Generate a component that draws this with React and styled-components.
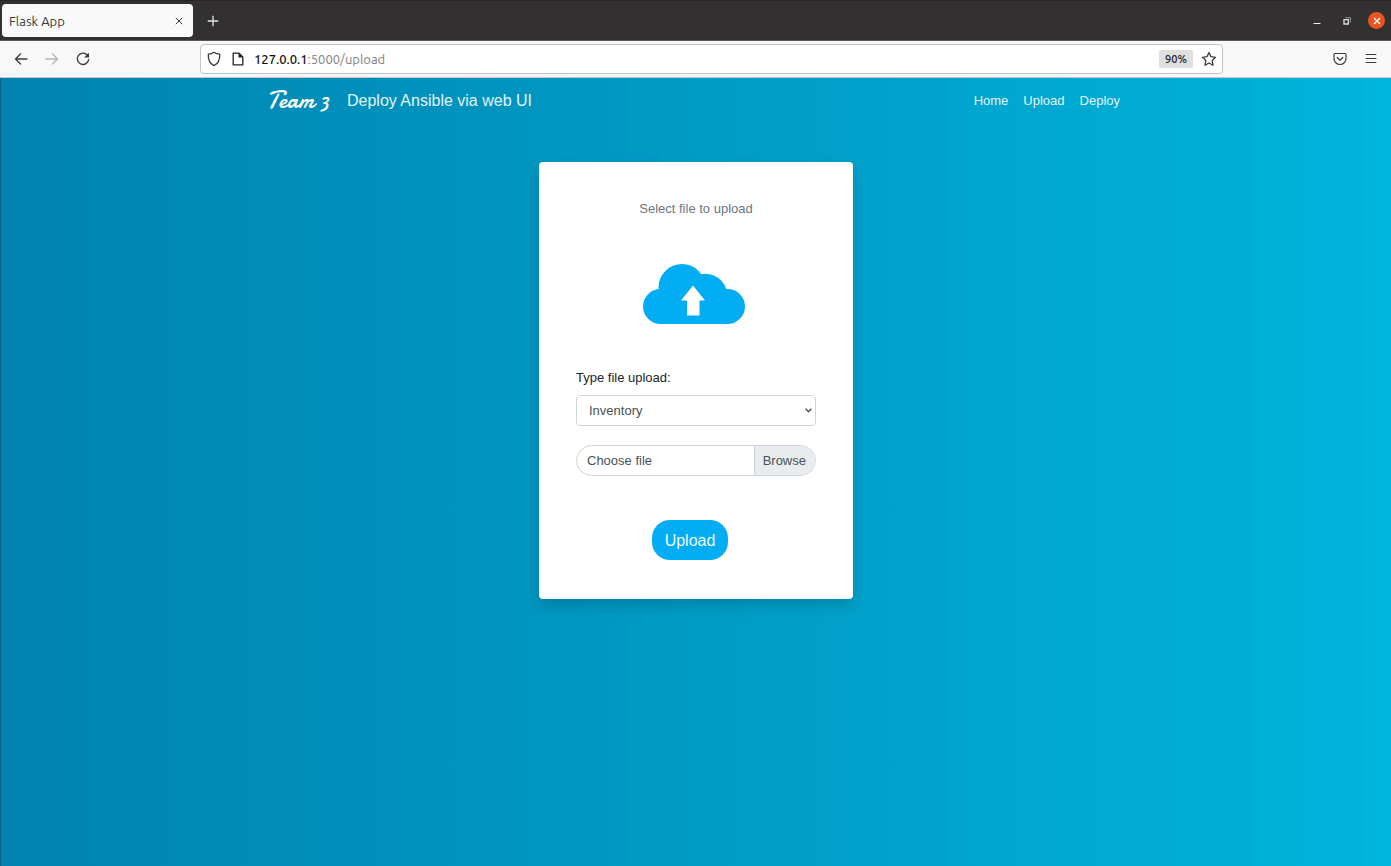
import React from "react";
import styled, { createGlobalStyle } from "styled-components";

const GlobalStyle = createGlobalStyle`
  *, *::before, *::after { box-sizing: border-box; }
  body { margin: 0; font-family: "Liberation Sans", Arial, sans-serif; font-size: 13px; line-height: 20px; color: #212529; }
  button, input, select { font: inherit; }
`;

const Window = styled.div`
  min-height: 100vh;
  display: flex;
  flex-direction: column;
`;

const TitleBar = styled.header`
  display: flex;
  align-items: center;
  height: 41px;
  padding: 0 6px 0 2px;
  background: #333031;
  border-top: 1px solid #272526;
  border-bottom: 1px solid #5a5858;
`;

const Tab = styled.div`
  display: flex;
  align-items: center;
  justify-content: space-between;
  width: 191px;
  height: 33px;
  padding: 0 6px 0 7px;
  border-radius: 4px;
  background: #f9f9f9;
  color: #3a3a3a;
  font-family: Ubuntu, "Noto Sans", sans-serif;
  font-size: 13px;
`;

const IconButton = styled.button`
  display: flex;
  align-items: center;
  justify-content: center;
  width: ${(p) => p.$size || 16}px;
  height: ${(p) => p.$size || 16}px;
  padding: 0;
  border: 0;
  border-radius: 50%;
  background: ${(p) => p.$bg || "transparent"};
  color: ${(p) => p.$color || "#3b3b3b"};
  svg { display: block; fill: none; stroke: currentColor; }
`;

const NewTab = styled.div`
  margin-left: 12px;
`;

const WindowControls = styled.div`
  display: flex;
  align-items: center;
  gap: 12px;
  margin-left: auto;
`;

const Toolbar = styled.div`
  display: grid;
  grid-template-columns: 200px minmax(0, 1fr) 168px;
  align-items: center;
  height: 37px;
  background: #f8f8f8;
  border-bottom: 1px solid #c5c5c5;
`;

const NavButtons = styled.div`
  display: flex;
  gap: 15px;
  padding-left: 13px;
`;

const ToolButtons = styled.div`
  display: flex;
  justify-content: flex-end;
  gap: 15px;
  padding-right: 12px;
`;

const AddressBar = styled.div`
  display: flex;
  align-items: center;
  height: 30px;
  padding: 0 5px;
  gap: 8px;
  background: #fff;
  border: 1px solid #c4c4c4;
  border-radius: 4px;
  font-family: Ubuntu, "Noto Sans", sans-serif;
`;

const Url = styled.div`
  flex: 1;
  font-size: 13px;
  color: #808080;
`;

const Host = styled.span`
  color: #111;
  font-weight: 500;
`;

const Zoom = styled.button`
  height: 18px;
  padding: 0 6px;
  border: 0;
  border-radius: 2px;
  background: #dfdfdf;
  color: #1c1c1c;
  font-size: 11px;
  line-height: 18px;
  font-weight: 500;
`;

const Page = styled.div`
  flex: 1;
  border-left: 1px solid #0d6587;
  background: linear-gradient(to right, #0083b0, #00b4db);
`;

const Navbar = styled.nav`
  display: flex;
  align-items: center;
  max-width: 858px;
  height: 46px;
  margin: 0 auto;
  padding-right: 5px;
  color: #fff;
`;

const Brand = styled.a`
  width: 80px;
  color: #fff;
  font-family: Damion, Satisfy, "Dancing Script", cursive;
  font-size: 24px;
  text-decoration: none;
`;

const Tagline = styled.span`
  color: #e3f4fa;
  font-size: 16px;
`;

const NavLinks = styled.div`
  display: flex;
  gap: 15px;
  margin-left: auto;
`;

const NavLink = styled.a`
  color: #e3f4fa;
  text-decoration: none;
`;

const Card = styled.main`
  width: 314px;
  margin: 38px auto 0;
  padding: 37px 37px 39px;
  border-radius: 4px;
  background: #fff;
  box-shadow: 0 7px 14px rgba(0, 0, 0, 0.15);
`;

const Prompt = styled.p`
  margin: 0;
  color: #6c757d;
  text-align: center;
`;

const CloudFrame = styled.div`
  display: flex;
  justify-content: center;
  padding: 45px 4px 44px 0;
`;

const Field = styled.div`
  margin-bottom: 19px;
`;

const FieldLabel = styled.label`
  display: block;
  margin-bottom: 7px;
`;

const SelectFrame = styled.div`
  display: grid;
  align-items: center;
  > * { grid-area: 1 / 1; }
  svg { justify-self: end; margin-right: 4px; pointer-events: none; }
`;

const Select = styled.select`
  appearance: none;
  width: 100%;
  height: 31px;
  padding: 0 12px;
  border: 1px solid #ced4da;
  border-radius: 4px;
  background: #fff;
  color: #495057;
`;

const FileLabel = styled.label`
  position: relative;
  display: flex;
  height: 31px;
  border: 1px solid #ced4da;
  border-radius: 16px;
  overflow: hidden;
  color: #495057;
  line-height: 29px;
`;

const FileInput = styled.input`
  position: absolute;
  inset: 0;
  width: 100%;
  opacity: 0;
`;

const FileName = styled.span`
  flex: 1;
  padding-left: 10px;
`;

const Browse = styled.span`
  padding: 0 9px 0 8px;
  border-left: 1px solid #ced4da;
  background: #e9ecef;
`;

const Actions = styled.div`
  display: flex;
  justify-content: center;
  padding: 25px 12px 0 0;
`;

const UploadButton = styled.button`
  height: 40px;
  padding: 1px 13px 0;
  border: 0;
  border-radius: 18px;
  background: #03adf3;
  color: #eefaff;
  font-size: 16px;
`;

function Cloud() {
  return (
    <svg width="102" height="60" viewBox="0 0 102 60" aria-hidden="true">
      <g fill="#03adf3">
        <circle cx="17.500" cy="42.500" r="17.500" />
        <circle cx="84.500" cy="42.500" r="17.500" />
        <circle cx="39" cy="23.500" r="23.500" />
        <circle cx="62.500" cy="31.500" r="21.700" />
        <path d="M17.500 25H84.500V60H17.500Z" />
      </g>
      <path fill="#fff" d="M50 21.500L62 36.500H56.500V51.500H44V36.500H38Z" />
    </svg>
  );
}

export default function App() {
  return (
    <Window>
      <GlobalStyle />
      <TitleBar>
        <Tab>
          <span>Flask App</span>
          <IconButton aria-label="Close tab">
            <svg width="8" height="8" viewBox="0 0 8 8"><path d="M.8.8l6.400 6.400M7.200.8L.8 7.200" /></svg>
          </IconButton>
        </Tab>
        <NewTab>
          <IconButton aria-label="New tab" $color="#e4e4e4">
            <svg width="12" height="12" viewBox="0 0 12 12"><path strokeWidth="1.300" d="M6 .7v10.600M.7 6h10.600" /></svg>
          </IconButton>
        </NewTab>
        <WindowControls>
          <IconButton aria-label="Minimize" $size={18} $color="#eee">
            <svg width="8" height="10" viewBox="0 0 8 10"><path d="M.5 7.500h7" /></svg>
          </IconButton>
          <IconButton aria-label="Restore" $size={18} $color="#ddd">
            <svg width="8" height="8" viewBox="0 0 8 8">
              <path strokeWidth="1.300" d="M1 2.700h4.300V7H1Z" />
              <path opacity=".6" d="M2.500.7h4.800v4.800" />
            </svg>
          </IconButton>
          <IconButton aria-label="Close window" $size={17} $bg="#e95420" $color="#fff">
            <svg width="8" height="8" viewBox="0 0 8 8"><path strokeWidth="1.300" d="M1 1l6 6M7 1L1 7" /></svg>
          </IconButton>
        </WindowControls>
      </TitleBar>
      <Toolbar>
        <NavButtons>
          <IconButton aria-label="Back">
            <svg width="14" height="14" viewBox="0 0 14 14"><path strokeWidth="1.300" strokeLinecap="round" strokeLinejoin="round" d="M13 7H1.500M6.500 2L1.500 7l5 5" /></svg>
          </IconButton>
          <IconButton aria-label="Forward" $color="#b5b5b5">
            <svg width="14" height="14" viewBox="0 0 14 14"><path strokeWidth="1.300" strokeLinecap="round" strokeLinejoin="round" d="M1 7h11.500M7.500 2l5 5l-5 5" /></svg>
          </IconButton>
          <IconButton aria-label="Reload">
            <svg width="14" height="14" viewBox="0 0 14 14">
              <path strokeWidth="1.300" strokeLinecap="round" d="M11.300 3A5.700 5.700 0 1 0 12.700 7.300" />
              <path fill="currentColor" stroke="none" d="M13 .7V5.600H8.100Z" />
            </svg>
          </IconButton>
        </NavButtons>
        <AddressBar>
          <IconButton aria-label="Tracking protection">
            <svg width="14" height="16" viewBox="0 0 14 16"><path strokeWidth="1.300" strokeLinejoin="round" d="M7 1.200C5.700 2.200 3.500 3 1.300 3.200C1 8.500 2.500 12.500 7 14.700C11.500 12.500 13 8.500 12.700 3.200C10.500 3 8.300 2.200 7 1.200Z" /></svg>
          </IconButton>
          <IconButton aria-label="Site information" $color="#222">
            <svg width="12" height="14" viewBox="0 0 12 14">
              <path strokeWidth="1.300" strokeLinejoin="round" d="M1.200 1.200H7L10.800 5V12.800H1.200Z" />
              <path fill="currentColor" stroke="none" d="M6.500 1L11 5.500H6.500Z" />
            </svg>
          </IconButton>
          <Url><Host>127.0.0.1</Host>:5000/upload</Url>
          <Zoom>90%</Zoom>
          <IconButton aria-label="Bookmark this page">
            <svg width="16" height="16" viewBox="0 0 16 16"><path strokeWidth="1.300" strokeLinejoin="round" d="M8 1.500L10 5.700L14.500 6.300L11.200 9.500L12 14.200L8 12L4 14.200L4.800 9.500L1.500 6.300L6 5.700Z" /></svg>
          </IconButton>
        </AddressBar>
        <ToolButtons>
          <IconButton aria-label="Save to Pocket">
            <svg width="14" height="14" viewBox="0 0 14 14"><path strokeWidth="1.200" strokeLinecap="round" strokeLinejoin="round" d="M2.200 1.500H11.800Q13 1.500 13 2.700V6.500A6 6 0 0 1 1 6.500V2.700Q1 1.500 2.200 1.500ZM4.200 5.500L7 8.200L9.800 5.500" /></svg>
          </IconButton>
          <IconButton aria-label="Open menu">
            <svg width="12" height="12" viewBox="0 0 12 12"><path strokeWidth="1.200" d="M.7 1.500h10.600M.7 5.500h10.600M.7 9.500h10.600" /></svg>
          </IconButton>
        </ToolButtons>
      </Toolbar>
      <Page>
        <Navbar>
          <Brand href="#">Team 3</Brand>
          <Tagline>Deploy Ansible via web UI</Tagline>
          <NavLinks>
            <NavLink href="#">Home</NavLink>
            <NavLink href="#">Upload</NavLink>
            <NavLink href="#">Deploy</NavLink>
          </NavLinks>
        </Navbar>
        <Card>
          <Prompt>Select file to upload</Prompt>
          <CloudFrame><Cloud /></CloudFrame>
          <form onSubmit={(e) => e.preventDefault()}>
            <Field>
              <FieldLabel htmlFor="file-type">Type file upload:</FieldLabel>
              <SelectFrame>
                <Select id="file-type"><option>Inventory</option></Select>
                <svg width="7" height="5" viewBox="0 0 7 5" aria-hidden="true"><path fill="none" stroke="#495057" strokeWidth="1.400" d="M.6.8L3.500 3.800L6.400.8" /></svg>
              </SelectFrame>
            </Field>
            <Field>
              <FileLabel>
                <FileInput type="file" />
                <FileName>Choose file</FileName>
                <Browse>Browse</Browse>
              </FileLabel>
            </Field>
            <Actions><UploadButton type="submit">Upload</UploadButton></Actions>
          </form>
        </Card>
      </Page>
    </Window>
  );
}
